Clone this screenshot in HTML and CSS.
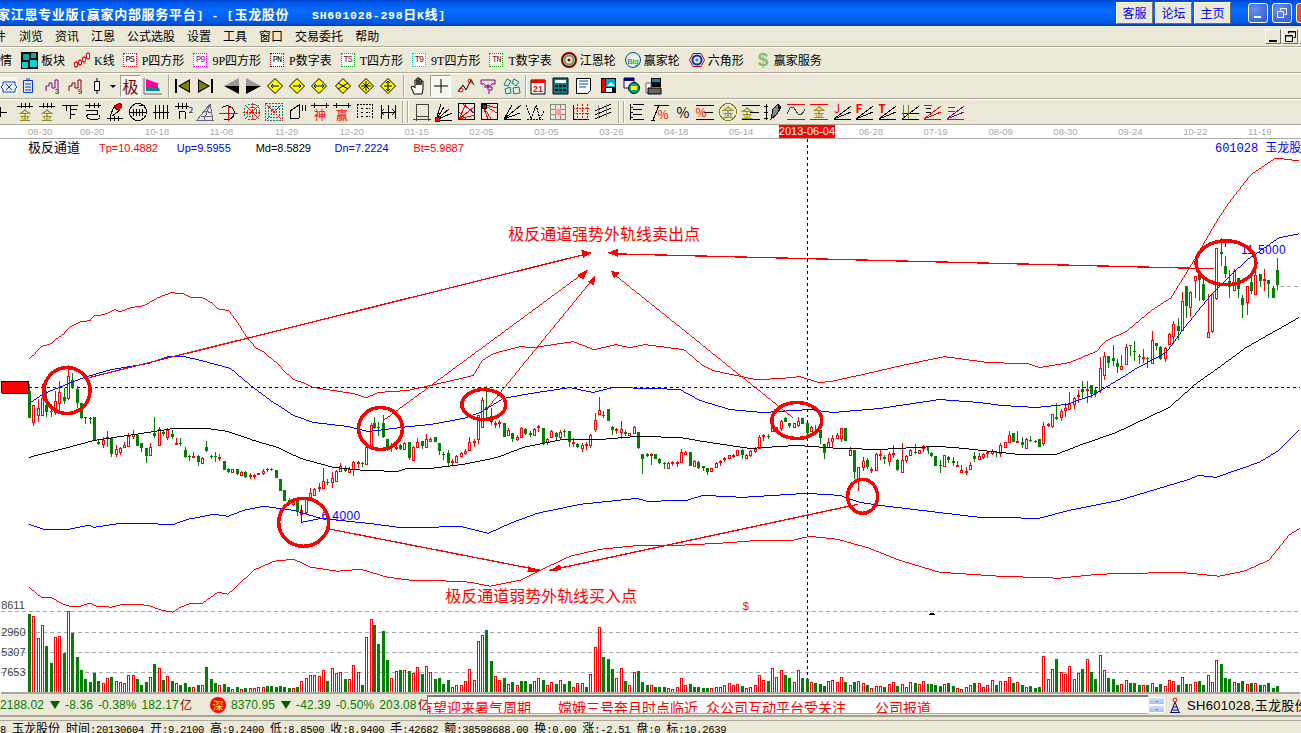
FILE: index.html
```html
<!DOCTYPE html>
<html lang="zh-CN">
<head>
  <meta charset="UTF-8" />
  <title>赢家江恩专业版</title>
  <link rel="stylesheet" href="styles.css">
</head>
<body>

<!-- title bar -->
<header class="titlebar">
  <div class="title-text">家江恩专业版<span>[</span>赢家内部服务平台<span>] - [</span>玉龙股份<span>   SH601028-298</span>日<span>K</span>线<span>]</span></div>
  <div class="title-links">
    <button class="link-btn">客服</button>
    <button class="link-btn">论坛</button>
    <button class="link-btn">主页</button>
  </div>
  <div class="caption">
    <div class="cap-btn"><svg width="18" height="18"><path d="M5 12h7v2H5z" fill="#fff"/></svg></div>
    <div class="cap-btn"><svg width="18" height="18" fill="none" stroke="#fff"><path d="M7.500 6.500v-2h6v6h-2"/><path d="M4.500 7.500h6v6h-6z"/></svg></div>
    <div class="cap-btn cap-close"></div>
  </div>
</header>

<!-- menu -->
<nav class="menubar">
  <span class="menu-cut">件</span>
  <span>浏览</span><span>资讯</span><span>江恩</span><span>公式选股</span><span>设置</span><span>工具</span><span>窗口</span><span>交易委托</span><span>帮助</span>
  <div class="mdi">
    <div class="mdi-btn"><svg width="14" height="13"><path d="M3 10h8v2H3z"/></svg></div>
    <div class="mdi-btn"><svg width="14" height="13" fill="none" stroke="#000"><path d="M5.500 3.500v-2h7v6h-2"/><path d="M2.500 5.500h7v6h-7z"/><path d="M5 2h7M2 6h7"/></svg></div>
    <div class="mdi-btn"></div>
  </div>
</nav>

<!-- toolbar: tools with labels -->
<div class="tb tb1">
  <span class="tool menu-cut">情</span>
  <div class="tool">
    <svg width="17" height="17"><path d="M0 0h17v17H0z"/><path d="M2 2h6v6H2zM10 1h5v5h-5z" fill="#00b0b0"/><path d="M1 10h6v6H1zM9 8h7v7H9z" fill="#00d8d8"/></svg>
    <span>板块</span>
  </div>
  <div class="tool tool-k">
    <svg width="17" height="17" fill="#fff" stroke="#f00" class="crisp"><path d="M2 9v7M6 7v7M10 4v8M14 0v8" /><path d="M0.500 10.500h3v4h-3zM4.500 8.500h3v4h-3zM8.500 5.500h3v4h-3zM12.500 1.500h3v5h-3z"/></svg>
    <span>K线</span>
  </div>
  <div class="tool"><b class="box red">PS</b><span>P四方形</span></div>
  <div class="tool"><b class="box pink">P9</b><span>9P四方形</span></div>
  <div class="tool"><b class="box dred">PN</b><span>P数字表</span></div>
  <div class="tool"><b class="box green">TS</b><span>T四方形</span></div>
  <div class="tool"><b class="box cyan">T9</b><span>9T四方形</span></div>
  <div class="tool"><b class="box lgreen">TN</b><span>T数字表</span></div>
  <div class="tool">
    <svg width="16" height="16" fill="none"><circle cx="8" cy="8" r="7" stroke="#800000" stroke-width="2"/><circle cx="8" cy="8" r="4.500" stroke="#6a9a6a" stroke-width="2"/><circle cx="8" cy="8" r="1.500" fill="#800000"/></svg>
    <span>江恩轮</span>
  </div>
  <div class="tool">
    <svg width="16" height="16"><circle cx="8" cy="8" r="7.500" fill="#e8f0e8" stroke="#004c8c"/><text x="8" y="12" class="big">Big</text></svg>
    <span>赢家轮</span>
  </div>
  <div class="tool">
    <svg width="16" height="16" fill="none"><path d="M4 1.500h8L15.500 8 12 14.500H4L.5 8z" stroke="#c00000"/><circle cx="8" cy="8" r="4.500" stroke="#0030c0" stroke-width="2"/><circle cx="8" cy="8" r="1.500" fill="#0090c0"/></svg>
    <span>六角形</span>
  </div>
  <div class="tool m5">
    <span class="dollar">$</span>
    <span>赢家服务</span>
  </div>
</div>

<!-- toolbar: view and period -->
<div class="tb tb2">
  <svg class="press-flat" width="18" height="18" fill="none" stroke="#0040e0"><path d="M3 5h12v3l2 2-2 2v3H3v-3l-2-2 2-2z"/><path d="M6 7l6 6M12 7l-6 6"/></svg>
  <svg class="m2" width="16" height="18" fill="none" stroke="#0040e0"><path d="M3.500 3.500h9v12h-9z"/><path d="M5 7h6M5 10h6M5 13h6M6 2h4"/></svg>
  <svg class="m9" width="16" height="18" fill="none" stroke="#800080"><path d="M1 14V9h3V6h3v5h3V3h3v9"/><text x="12" y="17" class="tiny">3</text></svg>
  <svg class="m7" width="16" height="18" fill="none" stroke="#800000"><path d="M1 14V9h3V6h3v5h3V3h3v9"/><text x="12" y="17" class="tiny">9</text></svg>
  <svg class="m8" width="24" height="18" fill="none" stroke="#000"><path d="M5 1v16"/><path d="M2.500 4.500h5v9h-5z" fill="#fff"/><path d="M18 8h6l-3 3z" fill="#000" stroke="none"/></svg>
  <div class="press m4"><span class="ji">极</span></div>
  <svg class="m2" width="20" height="18"><path d="M1 1v16h18" fill="none" stroke="#666"/><path d="M3 2l14 5H3z" fill="#f0a"/><path d="M3 7h12v5H3z" fill="#f0a"/><path d="M3 10l13 1 1 3H3z" fill="#088"/></svg>
  <div class="sep m5"></div>
  <svg class="m4" width="18" height="18"><path d="M1 2h2v14H1zM16 2v14L4 9z" fill="#000"/><path d="M15 4v10L6 9z" fill="#808000"/></svg>
  <svg class="m4" width="18" height="18"><path d="M15 2h2v14h-2zM2 2v14L14 9z" fill="#000"/><path d="M3 4v10l9-5z" fill="#808000"/></svg>
  <svg class="m8" width="18" height="18"><path d="M17 1v8H2z" fill="#999"/><path d="M17 17V9H2z" fill="#000"/></svg>
  <svg class="m5" width="18" height="18"><path d="M1 1v8h15z" fill="#999"/><path d="M1 17V9h15z" fill="#000"/></svg>
  <div class="dia m4"><svg width="16" height="16" viewBox="0 0 16 16"><path d="M8 .5L15.500 8 8 15.500.5 8z" fill="#ff0" stroke="#000"/><path d="M4 8h8M4 8l2-2M4 8l2 2" fill="none" stroke="#000"/></svg></div>
  <div class="dia m6"><svg width="16" height="16" viewBox="0 0 16 16"><path d="M8 .5L15.500 8 8 15.500.5 8z" fill="#ff0" stroke="#000"/><path d="M4 8h8M12 8l-2-2M12 8l-2 2" fill="none" stroke="#000"/></svg></div>
  <div class="dia m6"><svg width="16" height="16" viewBox="0 0 16 16"><path d="M8 .5L15.500 8 8 15.500.5 8z" fill="#ff0" stroke="#000"/><path d="M3 8h10M3 8l2-2M3 8l2 2M13 8l-2-2M13 8l-2 2" fill="none" stroke="#000"/></svg></div>
  <div class="dia m8"><svg width="16" height="16" viewBox="0 0 16 16"><path d="M8 .5L15.500 8 8 15.500.5 8z" fill="#ff0" stroke="#000"/><path d="M3 5l10 6M3 11l10-6" fill="none" stroke="#000"/></svg></div>
  <div class="dia m7"><svg width="16" height="16" viewBox="0 0 16 16"><path d="M8 .5L15.500 8 8 15.500.5 8z" fill="#ff0" stroke="#000"/><path d="M3 8h10M8 3v10M5 5l6 6M5 11l6-6" fill="none" stroke="#000"/></svg></div>
  <div class="dia m6"><svg width="16" height="16" viewBox="0 0 16 16"><path d="M8 .5L15.500 8 8 15.500.5 8z" fill="#ff0" stroke="#000"/><path d="M8 3v10M8 3L6 5M8 3l2 2M8 13l-2-2M8 13l2-2M4 8h8" fill="none" stroke="#000"/></svg></div>
  <div class="sep m7"></div>
  <svg class="m5" width="16" height="18" fill="#fff" stroke="#000"><path d="M4 17l-3-7 2-1 2 2V3h2v5V1h2v7V2h2v6V4h2v8l-1 5z"/></svg>
  <div class="press m4"><svg width="18" height="18" fill="none" stroke="#000"><path d="M9 2v14M2 9h14"/></svg></div>
  <svg class="m6" width="18" height="18" fill="none"><path d="M1 15l5-7 3 5 5-10 3 5" stroke="#000"/><circle cx="4" cy="13" r="2" stroke="#f00"/><circle cx="13" cy="4" r="2" stroke="#f00"/></svg>
  <svg class="m4" width="18" height="18" fill="none" stroke="#800080"><path d="M2 3h14v4h-3l-2 2H7L5 7H2zM5 10h8v3h-3v4M9 7v6"/></svg>
  <svg class="m6" width="18" height="18" fill="none" stroke="#008080"><path d="M4 2l-3 6 4 1 3-5zM11 2l5 3-3 4-4-3zM2 12l5-2 1 6-5 1zM10 11l6-1 1 6-6 1z"/></svg>
  <div class="sep m4"></div>
  <svg class="m3" width="17" height="18"><path d="M1 3h14v14H1z" fill="#fff" stroke="#000"/><path d="M1 3h14v3H1z" fill="#f00"/><text x="8" y="15" class="cal">21</text></svg>
  <svg class="m5" width="17" height="18"><path d="M1 1h15v16H1z" fill="#008080" stroke="#000"/><path d="M3 3h11v3H3z" fill="#fff"/><path d="M3 8h3v2H3zM7 8h3v2H7zM11 8h3v2h-3zM3 12h3v2H3zM7 12h3v2H7zM11 12h3v2h-3z" fill="#000"/></svg>
  <svg class="m6" width="17" height="18" fill="none" stroke="#000"><path d="M1.500 1.500h14v12l-3 3h-11z" fill="#fff"/><path d="M4 4h9M4 7h9M4 10h7" stroke="#0040e0"/></svg>
  <svg class="m8" width="17" height="18"><path d="M1 1h15v15H1z" fill="#000"/><path d="M2 2h3v13H2z" fill="#f00"/><path d="M6 2h9v8H6z" fill="#0ac"/><path d="M7 9l4-4 4 4z" fill="#fff"/><path d="M6 11h6v4H6z" fill="#fff"/></svg>
  <svg class="m6" width="17" height="18"><path d="M1 1h10v10H1z" fill="#fff" stroke="#00008c"/><path d="M1 1h10v3H1z" fill="#00008c"/><circle cx="11" cy="11" r="5.500" fill="#0a8" stroke="#000"/><path d="M8 9h6v4H8z" fill="#ff0"/></svg>
  <svg class="m5" width="17" height="18"><path d="M6 1h10v9H6z" fill="#000"/><path d="M7 2h8v3H7z" fill="#08c"/><path d="M1 6h5v10H1z" fill="#fff" stroke="#666"/><path d="M3 11h13v6H3z" fill="#666" stroke="#000"/></svg>
</div>

<!-- toolbar: drawing tools -->
<div class="tb tb3">
  <svg class="ic first" width="20" height="20"><path d="M0 10h15M8 5v10"/></svg>
  <svg class="ic" width="20" height="20"><path d="M2 4h16M6 1v5M10 1v5M14 1v5"/><text x="10" y="18" class="kin">金</text></svg>
  <svg class="ic" width="20" height="20"><path d="M2 4h16M6 1v5M10 1v5M14 1v5"/><text x="10" y="18" class="kin">金</text></svg>
  <svg class="ic" width="20" height="20"><path d="M2 3.500h16M6 3.500v5M10 3v14M10.500 7.500h6M10.500 12.500h4"/></svg>
  <svg class="ic" width="20" height="20"><path d="M2 3.500h16M6 1v5M11 1v5M15 1v5M3 8h11v4H6c-3 0-3 5 1 5h8c2 0 3-2 1-4"/></svg>
  <svg class="ic" width="20" height="20"><path d="M2 16h16M5 14v5M9 14v5M13 14v5M5 14l4-9 5 4-7 5"/><path d="M9 4l6-3 2 3-3 5z" fill="#f00" stroke="#800"/></svg>
  <svg class="ic" width="20" height="20"><circle cx="10" cy="10" r="8.500"/><path d="M1 10h18M5 7v7M8 7v7M11 7v7M14 7v7M11 4l6-1"/></svg>
  <svg class="ic" width="20" height="20"><path d="M2 10h16M4 3v14M8 3v14M12 3v14M16 3v14"/></svg>
  <svg class="ic" width="20" height="20"><path d="M1 4h14M4 1v6M8 1v6M12 1v6M5 17v-7c0-1 6-1 6 0v7"/><text x="17" y="11" class="tiny">2</text></svg>
  <svg class="ic" width="20" height="20"><path d="M1 18L14 2l3 16zM14 2L8 18M5 14l11 1M9 9l7 2" stroke="#668"/></svg>
  <svg class="ic" width="20" height="20"><path d="M3 6a7 7 0 1 1 2 11"/><path d="M9 3v16M0 11h19M9 6l5-1" stroke="#f00"/></svg>
  <svg class="ic" width="20" height="20" stroke-dasharray="2 1"><circle cx="10" cy="10" r="8" stroke="#088"/><circle cx="10" cy="10" r="5" stroke="#088"/><path d="M1 10h18M10 1v18M3 3l14 14M17 3L3 17" stroke="#f00"/></svg>
  <svg class="ic" width="20" height="20" stroke-dasharray="2 1"><path d="M1.500 1.500h17v17h-17zM4.500 4.500h11v11h-11z" stroke="#088"/><path d="M7.500 7.500h5v5h-5z" stroke="#088"/><path d="M1 1l18 18M19 1L1 19" stroke="#f00"/></svg>
  <svg class="ic" width="20" height="20"><path d="M3 17V9l9-6v13L3 17M15 3v6M18 3v6" stroke-dasharray="none"/></svg>
  <svg class="ic" width="20" height="20"><path d="M1 3.500h18M4 1v5M16 1v5"/><text x="10" y="18" class="rk">神</text></svg>
  <svg class="ic" width="20" height="20"><path d="M1 3.500h18M4 1v5M16 1v5"/><text x="10" y="18" class="rk">赢</text></svg>
  <svg class="ic" width="20" height="20"><path d="M2 2.500h16M2.500 2v15M17.500 2v15M6 6h2M11 6h4M6 10h2M11 10h4M6 14h2M11 14h4" stroke-dasharray="2 1"/></svg>
  <svg class="ic" width="20" height="20"><path d="M3 3v14M17 3v14M10 3v14M3 10h14M3 10l3-3M3 10l3 3M17 10l-3-3M17 10l-3 3"/></svg>
  <div class="sep m2"></div>
  <div class="sep"></div>
  <svg class="ic" width="20" height="20"><path d="M4 2.500h12v12H4zM1 17.500h18M4 14v5M16 14v5" stroke="#444"/></svg>
  <svg class="ic" width="20" height="20" stroke="#f00"><path d="M2 18L7 2M2 18l8-13M2 18L15 7M2 18l16-7M2 18h16"/><path d="M1 15h4v4H1z" fill="#f00" stroke="#800"/></svg>
  <svg class="ic" width="20" height="20"><path d="M1.500 1.500h16v16h-16z"/><path d="M2 17L9 2M2 17L17 5M2 17l16-4" stroke="#f00"/><path d="M2 10l8 8M6 2l12 10" stroke="#808"/></svg>
  <svg class="ic" width="20" height="20"><path d="M1.500 1.500h16v16h-16z"/><path d="M2 2l9 15M2 2l15 9M2 2l15 4M2 2l6 15" stroke="#f00"/><path d="M2 2h4v4H2z" fill="#808"/></svg>
  <svg class="ic" width="20" height="20"><path d="M1 17L18 3M1 17l16-6M1 17h17M1 17l8-14" /></svg>
  <svg class="ic" width="20" height="20"><path d="M1 3l5 14 5-14 4 14 4-8M2 17h16" stroke-dasharray="2 1"/></svg>
  <svg class="ic" width="20" height="20"><path d="M2.500 2.500h15v15h-15zM7.500 2v16M12.500 2v16M2 7.500h16M2 12.500h16" stroke="#888"/><path d="M7 7h6v6H7z" fill="#f99" stroke="none"/></svg>
  <svg class="ic" width="20" height="20"><path d="M2.500 2.500v15h15"/><path d="M6.500 2v16M11.500 2v16M16.500 2v16M2 6.500h16M2 11.500h16" stroke="#f00" stroke-dasharray="2 1"/></svg>
  <svg class="ic" width="20" height="20"><path d="M2 9l16-7M2 13L18 6M2 17l16-7"/><path d="M5 3v14M13 2v13" stroke="#888"/></svg>
  <div class="sep m2"></div>
  <div class="sep"></div>
  <svg class="ic" width="20" height="20"><path d="M3 2v16M6 2.500h11M6 7.500h9M6 12.500h9M6 17.500h11M3 5h3M3 10h3M3 15h3"/></svg>
  <svg class="ic" width="20" height="20"><path d="M4 3.500h15M3 18L9 3M1 18h4" stroke="#000"/><text x="13" y="17" class="pct">%</text></svg>
  <svg class="ic" width="20" height="20"><text x="10" y="16" class="pct black">%</text></svg>
  <svg class="ic" width="20" height="20"><path d="M1 3.500h18M9 10.500h9M1 17.500h18"/><text x="6" y="15" class="pct">%</text></svg>
  <svg class="ic" width="20" height="20"><circle cx="10" cy="10" r="8.500" stroke="#808000"/><text x="10" y="15" class="kin">金</text></svg>
  <svg class="ic" width="20" height="20"><path d="M1 3.500h18M9 10.500h9M1 17.500h18"/><text x="6" y="16" class="kin">金</text></svg>
  <svg class="ic" width="20" height="20"><path d="M3 2v16M1 4h4M1 16h4M1 10h4"/><path d="M8 17l2-10 5-5 3 3-4 7z" fill="#888"/><path d="M15 2l3 3-3 2z" fill="#f00"/></svg>
  <svg class="ic" width="20" height="20"><path d="M1 2.500h18M1 17.500h18" stroke="#f00"/><path d="M1 12c4-10 6-8 9-3s5 6 9-2" stroke="#444"/></svg>
  <svg class="ic" width="20" height="20"><path d="M1 2.500h18M1 17.500h18" stroke="#f00"/><text x="10" y="15" class="kin">金</text></svg>
  <svg class="ic" width="20" height="20"><path d="M2 17L19 4M2 17h17M2 17L19 10"/><text x="5" y="11" class="rk">J</text></svg>
  <svg class="ic" width="20" height="20"><path d="M2 17L19 4M2 17h17M2 17L19 10"/><text x="5" y="11" class="rk bold">F</text></svg>
  <svg class="ic" width="20" height="20"><path d="M2 17L19 4M2 17h17M2 17L19 10"/><text x="5" y="11" class="rk bold">T</text></svg>
  <svg class="ic" width="20" height="20"><path d="M2 17L19 4M2 17h17M2 11h17" /><path d="M3 3v14M8 3v14" stroke="#808000"/></svg>
  <svg class="ic" width="20" height="20"><path d="M2 17L19 4M2 17h17M2 17L19 10M2 3h8" stroke="#f00"/><path d="M4 6h5M4 10h5" stroke="#000"/></svg>
  <svg class="ic" width="20" height="20"><path d="M2 17L19 4M2 17L19 10" stroke="#808"/><path d="M2 17h17M3 5h7M3 9h7" stroke="#f00"/></svg>
</div>

<!-- date axis -->
<div class="axis">
  <span class="tick tick-first">08-30</span><span class="tick">09-20</span><span class="tick">10-18</span><span class="tick">11-08</span><span class="tick">11-29</span><span class="tick">12-20</span><span class="tick">01-15</span><span class="tick">02-05</span><span class="tick">03-05</span><span class="tick">03-26</span><span class="tick">04-18</span><span class="tick">05-14</span><span class="tick"><b class="cur">2013-06-04</b></span><span class="tick">06-28</span><span class="tick">07-19</span><span class="tick">08-09</span><span class="tick">08-30</span><span class="tick">09-24</span><span class="tick">10-22</span><span class="tick">11-19</span>
</div>

<!-- chart, numbers in page pixels -->
<svg class="chart" width="1301" height="556" viewBox="0 138 1301 556">
  <text x="27" y="151" class="legend-name">极反通道</text>
  <text x="98" y="151" class="legend red">Tp=10.4882</text>
  <text x="176" y="151" class="legend blue">Up=9.5955</text>
  <text x="255" y="151" class="legend dark">Md=8.5829</text>
  <text x="334" y="151" class="legend blue">Dn=7.2224</text>
  <text x="413" y="151" class="legend red">Bt=5.9887</text>
  <text x="1216" y="151" class="stock-name">601028 玉龙股份</text>

  <path d="M0 611.500H1301M0 632.500H1301M0 652.500H1301M0 672.500H1301" class="grid"/>
  <path d="M1281 285.500H1301" class="grid"/>
  <path d="M28 386.500H1301M807.500 138V692" class="cross"/>
  <path d="M0.500 380.500h27v12h-27z" fill="#f00" stroke="#000"/>

  <text x="0" y="609" class="vol-label">8611</text>
  <text x="0" y="636" class="vol-label">2960</text>
  <text x="0" y="656" class="vol-label">5307</text>
  <text x="0" y="676" class="vol-label">7653</text>

  <g id="vols"></g>
  <path d="M0 692h1301v2H0z" fill="#a8a8a8"/>
  <g id="candles"></g>

  <polyline class="band-r" points="28,358 33,354 40,346 50,343 57,337 63,333 68,327 80,321 89,320 93,315 103,314 114,309 119,311 130,307 143,305 157,297 170,292 183,293 190,297 202,297 212,303 217,308 228,310 237,322 245,335 255,347 263,351 267,355 277,363 283,370 293,379 302,382 313,387 333,390 353,393 365,397 377,392 407,390 430,385 473,375 482,360 493,353 520,346 533,347 573,341 594,349 616,344 630,347 645,344 684,349 703,365 713,370 756,379 781,378 800,376 819,382 831,381 863,374 902,365 945,356 989,362 1028,363 1040,367 1070,362 1097,351 1107,340 1127,331 1152,310 1172,297 1193,263 1218,220 1230,202 1247,180 1253,173 1277,157 1300,160"/>
  <polyline class="band-b" points="28,403 43,393 83,377 110,369 147,363 167,356 183,356 197,359 223,366 230,368 250,385 270,400 293,415 313,422 347,426 367,431 400,427 430,424 463,418 480,412 503,398 530,393 570,387 593,392 613,387 657,388 680,389 700,400 730,409 763,412 810,409 833,412 880,408 940,399 980,402 1003,405 1037,407 1067,404 1093,395 1123,377 1137,368 1167,352 1187,325 1213,293 1247,260 1280,237 1300,233"/>
  <polyline class="band-k" points="28,457 43,453 67,447 93,440 147,432 173,428 207,428 227,431 253,440 277,447 300,458 333,467 363,470 397,471 407,468 430,468 463,464 497,457 523,447 563,439 600,439 637,436 680,437 703,441 750,448 797,445 840,448 880,449 917,447 939,446 965,448 982,450 1020,454 1057,454 1080,445 1117,432 1170,407 1197,383 1220,367 1247,347 1277,330 1300,317"/>
  <polyline class="band-b" points="28,524 43,529 67,529 88,525 93,527 120,523 173,524 187,519 213,514 227,516 243,510 263,506 293,510 320,518 367,523 397,527 430,527 460,526 488,533 510,523 537,513 580,504 637,498 647,501 687,500 703,495 743,497 807,493 840,495 860,502 880,505 930,511 980,517 1040,518 1070,510 1120,500 1190,479 1200,475 1217,477 1237,470 1260,462 1280,450 1300,430"/>
  <polyline class="band-r" points="28,587 40,597 50,597 60,603 68,606 80,606 89,603 95,606 110,607 123,604 147,605 160,610 172,612 180,607 190,603 202,603 217,592 227,594 233,589 253,570 273,561 293,559 310,567 337,571 360,569 387,577 410,580 430,580 470,582 490,586 520,580 540,570 570,556 600,549 640,545 680,545 720,543 760,540 793,540 810,536 838,539 870,548 900,560 940,572 1000,576 1060,578 1100,574 1180,572 1220,576 1245,571 1270,560 1290,535 1301,528"/>

  <!-- hand drawn notes over the chart -->
  <path d="M300.500 505V522L321 518M1227 240v6" class="note-blue"/>
  <text x="321" y="520" class="price">6.4000</text>
  <text x="1242" y="253" class="price">11.5000</text>
  <path d="M88 377L585 253.500M612 253L1215 268M325 528L540 570M858 504L550 570" class="arrow"/>
  <path d="M383 420L588 269M487 408L593 278M793 417L612 272" class="arrow-thin"/>
  <path d="M592 252L581 249 583 257zM607 252L618 248 618 256zM588 269L577 274 583 279zM595 275L588 281 594 285zM611 270L620 272 614 278zM540 571L528 566 527 572zM548 571L560 564 561 570z" fill="#f00"/>
  <ellipse class="ring" cx="66" cy="390" rx="23" ry="23"/>
  <ellipse class="ring" cx="380" cy="428" rx="22" ry="21"/>
  <ellipse class="ring" cx="303" cy="522" rx="25" ry="24"/>
  <ellipse class="ring" cx="483.500" cy="404" rx="22" ry="15"/>
  <ellipse class="ring" cx="797" cy="420" rx="25" ry="18"/>
  <ellipse class="ring" cx="863" cy="496" rx="15" ry="17"/>
  <ellipse class="ring" cx="1227" cy="262" rx="30" ry="22"/>
  <text x="508" y="239" class="note">极反通道强势外轨线卖出点</text>
  <text x="445" y="602" class="note">极反通道弱势外轨线买入点</text>
  <text x="743" y="610" class="mark">$</text>
  <path d="M929 615l3.500-3 3.500 3z" fill="#000"/>
</svg>

<!-- status -->
<div class="status">
  <div class="index">
    <span>2188.02</span><i class="down"></i><span>-8.36</span><span>-0.38%</span><span>182.17</span><em>亿</em>
    <span class="sz">深</span>
    <span>8370.95</span><i class="down"></i><span>-42.39</span><span>-0.50%</span><span>203.08</span><em>亿</em>
  </div>
  <div class="news">
    <span class="n-first">有望迎来暑气周期</span><span class="n-mid">嫦娥三号奔月时点临近</span><span class="n-near">众公司互动平台受关注</span><span class="n-wide">公司报道</span>
  </div>
  <div class="spin"><div class="spin-btn">-</div><div class="spin-btn">-</div></div>
  <div class="quote">
    <svg width="12" height="16" fill="none" stroke="#000080"><path d="M6 5L2 15M6 5l4 10M1 15.500h10M4 10h4M3 13h6"/><circle cx="6" cy="3" r="2" stroke="#f00"/></svg>
    <span>SH601028,玉龙股份</span>
  </div>
</div>
<div class="rule"></div>
<footer class="bottom">
  <span class="cut"><b>8</b></span>
  <span>玉龙股份</span><span>时间<b>:20130604</b></span><span>开<b>:9.2100</b></span><span>高<b>:9.2400</b></span><span>低<b>:8.8500</b></span><span>收<b>:8.9400</b></span><span>手<b>:42682</b></span><span>额<b>:38598688.00</b></span><span>换<b>:0.00</b></span><span>涨<b>:-2.51</b></span><span>盘<b>:0</b></span><span>标<b>:10.2639</b></span>
</footer>

<script src="chart.js"></script>
</body>
</html>
```

FILE: styles.css
```css
:root {
  --face: #ece9d8;
  --line: #aca899;
  --cjk: "Liberation Serif", "Noto Sans CJK SC", serif;
  --num: "Liberation Sans", "Noto Sans CJK SC", sans-serif;
}
* {
  margin: 0;
  padding: 0;
  box-sizing: border-box;
}
body {
  width: 1301px;
  height: 733px;
  overflow: hidden;
  background: var(--face);
  font-family: var(--cjk);
  font-size: 12px;
}
svg {
  display: block;
  flex: none;
}

/* title bar */
.titlebar {
  display: flex;
  align-items: center;
  height: 26px;
  overflow: hidden;
  background: linear-gradient(#0044d0, #0058ee 12%, #0a6cff 40%, #0062f0 70%, #0052dc 90%, #003cb0);
}
.title-text {
  flex: 1;
  margin-left: -3px;
  color: #fff;
  font-family: "Noto Sans CJK SC", sans-serif;
  font-size: 13px;
  font-weight: bold;
  letter-spacing: 0.7px;
  white-space: pre;
}
.title-text span {
  font-family: "Liberation Mono", monospace;
  font-size: 11.5px;
}
.title-links {
  display: flex;
  gap: 2px;
  margin-right: 17px;
}
.link-btn {
  width: 37px;
  height: 22px;
  background: var(--face);
  border: 1px solid;
  border-color: #fff #716f64 #716f64 #fff;
  color: #0000ff;
  font-family: var(--cjk);
  font-size: 12px;
}
.caption {
  display: flex;
  gap: 4px;
  width: 53px;
  flex: none;
}
.cap-btn {
  flex: none;
  width: 20px;
  height: 20px;
  border: 1px solid #fff;
  border-radius: 3px;
  background: radial-gradient(circle at 30% 30%, #6a90f0, #2a55d8);
}
.cap-close {
  background: #e0502a;
}

/* menu */
.menubar {
  display: flex;
  align-items: center;
  gap: 12px;
  height: 21px;
  padding-left: 19px;
  border-bottom: 1px solid var(--line);
}
.menu-cut {
  width: 6px;
  margin-left: -19px;
  margin-right: 1px;
  overflow: hidden;
  direction: rtl;
}
.mdi {
  display: flex;
  margin-left: auto;
  margin-right: -14px;
  gap: 1px;
}
.mdi-btn {
  width: 16px;
  height: 15px;
  background: var(--face);
  border: 1px solid;
  border-color: #fff #716f64 #716f64 #fff;
}

/* toolbars */
.tb {
  display: flex;
  align-items: center;
  height: 26px;
  border-top: 1px solid #fff;
  border-bottom: 1px solid var(--line);
  overflow: hidden;
}
.tb1 {
  gap: 9px;
}
.tb1 .menu-cut {
  width: 12px;
  margin: 0;
  flex: none;
}
.tool {
  display: flex;
  align-items: center;
  gap: 3px;
  white-space: nowrap;
}
.tool-k {
  margin-right: -1px;
}
.box {
  flex: none;
  width: 14px;
  height: 14px;
  margin-right: 2px;
  border: 1px dotted;
  font: 8.500px/12px "Liberation Mono", monospace;
  letter-spacing: -0.8px;
  text-align: center;
  color: #000;
  background: #fff;
}
.red { border-color: #f00; }
.pink { border-color: #f0f; color: #800080; }
.dred { border-color: #800000; }
.green { border-color: #0a0; color: #800000; }
.cyan { border-color: #0cc; color: #800000; }
.lgreen { border-color: #0a0; color: #a00000; }
.big {
  fill: #008000;
  font: 8px var(--num);
  text-anchor: middle;
}
.dollar {
  width: 13px;
  color: #7fbf7f;
  font: bold 19px var(--num);
  line-height: 20px;
}
.tiny {
  fill: #000;
  stroke: none;
  font: 8px var(--num);
  text-anchor: middle;
}
.cal {
  fill: #f00;
  font: bold 9px var(--num);
  text-anchor: middle;
}
.ji {
  color: #800000;
  font: 16px "Noto Sans CJK SC", sans-serif;
  line-height: 18px;
}
.press {
  display: flex;
  align-items: center;
  justify-content: center;
  width: 21px;
  height: 22px;
  flex: none;
  background: #f7f6ef;
  border: 1px solid;
  border-color: #a09e90 #fff #fff #a09e90;
}
.press-flat {
  background: #f7f6ef;
}
.sep {
  flex: none;
  width: 2px;
  height: 22px;
  border-left: 1px solid var(--line);
  border-right: 1px solid #fff;
}
.m2 { margin-left: 2px; }
.m3 { margin-left: 3px; }
.m4 { margin-left: 4px; }
.m5 { margin-left: 5px; }
.m6 { margin-left: 6px; }
.m7 { margin-left: 7px; }
.m8 { margin-left: 8px; }
.m9 { margin-left: 9px; }
.dia {
  flex: none;
}
.tb3 {
  gap: 2.7px;
}
.first {
  margin-left: -8px;
}
.ic {
  fill: none;
  stroke: #000;
  shape-rendering: crispEdges;
}
.ic text {
  stroke: none;
  text-anchor: middle;
  font-family: "Noto Sans CJK SC", sans-serif;
}
.kin {
  fill: #808000;
  font-size: 12px;
}
.rk {
  fill: #f00;
  font-size: 12px;
}
.ic .bold {
  font-weight: bold;
}
.pct {
  fill: #f00;
  font-size: 12px;
}
.ic .black {
  fill: #000;
  font-size: 14px;
}

/* date axis */
.axis {
  display: flex;
  align-items: center;
  height: 13px;
  padding-left: 28px;
  background: #fff;
  color: #a8a8a8;
  font: 9.500px var(--num);
  overflow: hidden;
}
.tick {
  flex: 0 0 64.9px;
  line-height: 13px;
  white-space: nowrap;
}
.tick-first {
  flex-basis: 52px;
}
.cur {
  display: inline-block;
  margin-left: -15px;
  background: #f00;
  color: #fff;
  font-weight: normal;
  font-size: 11px;
  line-height: 13px;
}

/* chart */
.chart {
  background: #fff;
  border-top: 1px solid #a8a8a8;
}
.chart polyline, .chart path, .chart ellipse, .chart rect {
  shape-rendering: crispEdges;
}
.chart polyline {
  fill: none;
}
.band-r { stroke: #f00; }
.band-b { stroke: #00f; }
.band-k { stroke: #000; }
.grid {
  stroke: #a8a8a8;
  stroke-dasharray: 4 3;
}
.cross {
  stroke: #000;
  stroke-dasharray: 3 3;
}
.legend-name {
  font: 13px "Noto Sans CJK SC", sans-serif;
  fill: #000;
}
.legend {
  font: 11px var(--num);
}
.legend.red { fill: #f00; }
.legend.blue { fill: #00f; }
.legend.dark { fill: #000; }
.stock-name {
  fill: #00f;
  font: 12px "Liberation Mono", "Noto Sans CJK SC", monospace;
}
.vol-label {
  fill: #444;
  font: 11px var(--num);
}
.price {
  fill: #00f;
  font: 12px var(--num);
  letter-spacing: 0.4px;
}
.note {
  fill: #f00;
  font: 16px "Noto Sans CJK SC", sans-serif;
}
.mark {
  fill: #f00;
  font: 11px var(--num);
}
.note-blue {
  fill: none;
  stroke: #00f;
}
.arrow {
  fill: none;
  stroke: #f00;
  stroke-width: 1.3;
}
.arrow-thin {
  fill: none;
  stroke: #f00;
}
.ring {
  fill: none;
  stroke: #f00;
  stroke-width: 3.5;
}

/* status */
.status {
  display: flex;
  height: 21px;
}
.index {
  display: flex;
  align-items: center;
  gap: 5px;
  flex: 0 0 427px;
  color: #008000;
  font: 12px var(--num);
  letter-spacing: 0.1px;
  overflow: hidden;
  white-space: nowrap;
}
.index em {
  margin-left: -4px;
  color: #800000;
  font: normal 12px "Noto Sans CJK SC", sans-serif;
}
.down {
  flex: none;
  width: 0;
  height: 0;
  margin-left: 1px;
  border-left: 5px solid transparent;
  border-right: 5px solid transparent;
  border-top: 8px solid #006000;
}
.sz {
  flex: none;
  width: 16px;
  height: 16px;
  margin-left: 13px;
  border-radius: 50%;
  background: #f00;
  color: #ff0;
  font: 11px/16px "Noto Sans CJK SC", sans-serif;
  text-align: center;
}
.news {
  display: flex;
  flex: 0 0 721px;
  height: 19px;
  margin-top: 1px;
  padding-top: 1px;
  background: #fff;
  border-top: 2px solid #7c7b72;
  border-left: 1px solid #7c7b72;
  border-bottom: 1px solid var(--line);
  overflow: hidden;
  color: #f00;
  font: 14px/18px "Noto Sans CJK SC", sans-serif;
  white-space: nowrap;
}
.news span {
  flex: none;
}
.n-first { margin-left: -9px; }
.n-mid { margin-left: 27px; }
.n-wide { margin-left: 29px; }
.n-near { margin-left: 8px; }
.spin {
  flex: none;
  width: 17px;
  margin-top: 3px;
}
.spin-btn {
  height: 8px;
  background: linear-gradient(#d4e0f8, #a8c0ec);
  border: 1px solid #fff;
  border-radius: 2px;
  color: #204080;
  font: 8px/6px var(--num);
  text-align: center;
}
.quote {
  display: flex;
  align-items: center;
  gap: 6px;
  padding-left: 4px;
  font: 13px var(--num);
  white-space: nowrap;
  overflow: hidden;
  letter-spacing: 0.3px;
  flex: 1;
}
.rule {
  height: 2px;
  background: #a5a394;
}
.bottom {
  display: flex;
  gap: 6px;
  height: 13px;
  margin-top: 3px;
  border-top: 1px solid var(--line);
  font-family: "Noto Sans CJK SC", sans-serif;
  font-size: 12px;
  line-height: 13px;
  white-space: nowrap;
  overflow: hidden;
}
.bottom b {
  font: normal 10.500px "Liberation Mono", monospace;
  letter-spacing: -0.3px;
}
.bottom .cut {
  width: 6px;
}
```

FILE: chart.js
```js
// candles and volume are filled in here because there are so many of them
// a candle is [red?, body top, body bottom, wick top, wick bottom]
// y values were read off a 3x crop: y = 340 + v / 3
var r = 1, g = 0;
var candles = [
  [g,150,233,130,233],[r,192,245,192,257],[r,202,222,175,245],[r,170,222,130,225],[g,192,212,150,232],
  [g,210,214,190,232],[r,180,212,150,222],[r,152,187,120,207],[g,168,180,140,190],[r,105,172,73,177],
  [g,118,142,95,145],[g,143,187,135,200],[g,187,233,187,238],[g,232,234,230,253],[g,234,236,232,253],
  [g,232,300,232,302],[g,305,312,300,315],[r,300,311,290,325],[r,290,295,273,322],[g,295,342,295,350],
  [r,327,342,315,350],[r,325,335,320,345],[r,315,320,305,325],[r,288,318,278,320],[r,282,288,270,298],
  [g,285,317,285,317],[g,308,325,308,335],[g,323,347,323,368],[r,322,344,310,345],[g,278,288,232,295],
  [r,268,315,260,318],[g,275,282,270,287],[r,270,290,263,300],[g,282,292,270,297],[r,309,311,295,315],
  [g,308,312,295,317],[g,330,352,320,355],[g,347,352,345,362],[r,348,352,335,355],[g,348,367,345,377],
  [r,353,370,350,372],[g,322,333,303,335],[g,347,350,345,357],[g,347,350,336,365],[r,351,353,343,362],
  [g,363,390,363,390],[g,386,396,383,398],[r,387,397,387,397],[g,388,402,386,404],[r,396,404,394,408],
  [g,395,411,393,413],[r,405,407,400,417],[r,406,408,403,418],[r,400,402,398,404],[r,392,399,388,404],
  [g,386,388,384,395],[g,386,388,384,392],[g,390,415,390,415],[g,418,452,418,452],[g,450,482,450,482],
  [g,480,487,475,490],[r,487,493,483,497],[g,484,514,484,528],[r,510,522,505,548],[r,475,516,470,522],
  [r,458,470,445,476],[r,447,465,445,467],[r,440,445,428,456],[r,423,443,385,447],[g,425,428,418,435],
  [r,414,425,395,445],[r,393,423,390,425],[r,378,392,370,393],[g,385,392,378,395],[r,388,396,380,398],
  [r,366,388,362,408],[r,366,370,362,385],[g,368,370,366,382],[r,320,372,320,376],[r,256,320,250,328],
  [g,250,263,232,266],[g,260,263,245,287],[g,248,290,223,294],[g,296,323,296,332],[r,319,321,308,336],
  [r,320,322,312,330],[g,316,326,312,330],[r,308,326,306,328],[g,307,353,307,360],[r,320,360,318,362],
  [r,306,322,295,325],[g,303,317,303,328],[r,296,320,283,322],
  // second crop
  [r,296,303,292,305],[g,292,305,292,305],[g,310,332,310,345],[g,342,345,335,360],[g,340,368,330,378],
  [r,364,366,358,378],[r,347,365,345,367],[r,340,348,335,352],[r,332,340,328,345],[r,306,330,292,332],
  [r,302,305,298,320],[r,223,296,223,311],[r,177,260,168,262],[g,197,207,135,238],[g,226,246,200,255],
  [r,249,252,243,263],[r,246,250,240,265],[g,250,290,250,290],[r,270,284,265,288],[g,280,298,278,305],
  [r,290,298,285,302],[r,264,290,262,292],[g,268,282,265,286],[g,280,285,272,292],[r,268,284,265,286],
  [r,258,260,255,276],[g,264,308,264,315],[r,298,306,295,315],[r,274,292,270,295],[g,278,290,275,302],
  [r,275,290,270,298],[g,272,275,268,290],[g,273,305,273,320],[r,305,307,295,320],[g,311,320,308,325],
  [r,316,324,310,335],[r,311,313,306,330],[r,284,315,282,325],[r,240,266,215,275],[r,206,218,168,220],
  [g,222,224,210,234],[g,203,242,203,242],[g,260,270,258,285],[r,267,269,264,282],[r,268,276,243,296],
  [g,275,282,270,287],[r,280,285,278,285],[r,260,280,258,282],[g,276,325,276,327],[g,343,357,343,402],
  [g,342,347,338,352],[r,342,344,340,376],[g,343,358,343,358],[g,358,370,355,372],[g,368,372,366,387],
  [r,370,384,366,387],[r,367,369,364,378],[r,367,370,362,381],[r,337,365,327,367],[r,337,343,334,346],
  [g,336,378,336,378],[r,363,377,361,379],[g,366,384,364,387],[g,379,385,377,392],[g,385,396,385,404],
  [r,385,393,383,396],[r,368,382,366,384],[r,362,364,360,378],[r,353,355,350,365],[r,346,353,344,356],
  [r,346,348,343,354],[r,331,345,329,347],[g,330,345,328,356],[r,344,355,342,358],[r,332,344,329,350],
  [r,328,332,320,340],[r,291,325,285,327],[r,285,287,282,304],[g,288,290,283,296],[r,250,272,250,272],
  [r,262,270,262,270],[r,243,263,240,272],[g,235,245,230,247],[g,248,258,248,265],[r,250,260,248,262],
  [r,242,256,230,260],[g,235,252,235,252],[g,250,278,250,285],[r,262,272,258,276],[g,272,275,255,285],
  [g,270,295,270,312],[g,313,338,313,356],[r,305,320,295,322],[r,293,303,285,325],[r,285,295,280,298],
  [r,265,295,263,306],[g,265,304,265,304],[r,330,346,320,348],[g,330,397,330,416],[r,380,420,380,452],
  [r,362,380,350,392],[g,360,382,355,387],[r,387,389,382,400],[r,342,390,340,392],
  // third crop
  [r,342,345,327,360],[g,350,358,345,372],[r,342,362,335,378],[r,339,341,315,354],[g,360,390,358,392],
  [r,360,395,310,396],[r,348,359,345,368],[r,330,345,327,348],[g,336,338,312,342],[r,330,340,330,340],
  [r,319,323,314,335],[g,320,333,320,343],[g,338,348,335,352],[g,348,378,348,378],[g,376,379,360,398],
  [r,346,377,346,377],[g,352,360,347,368],[g,362,370,352,378],[r,376,378,364,382],[r,390,395,376,395],
  [r,392,393,382,404],[r,376,386,365,386],[g,348,358,337,365],[r,348,356,338,360],[r,342,350,338,356],
  [r,337,340,332,353],[r,332,340,328,345],[g,336,338,332,350]
];
// last crop has y = 150 + v / 3
var lastCrop = [
  [r,885,908,880,920],[r,876,890,876,890],[r,855,877,843,880],[g,850,876,850,876],[r,872,875,843,876],
  [g,875,886,862,893],[r,867,893,865,898],[g,870,873,858,876],[g,873,875,870,880],[g,867,890,867,890],
  [r,828,878,815,888],[r,823,826,818,832],[r,790,827,788,835],[g,798,807,757,810],[r,780,802,775,812],
  [r,770,778,755,798],[r,758,775,722,778],[r,740,760,738,775],[r,733,736,718,757],[g,714,722,690,742],
  [r,714,717,690,755],[g,702,730,702,742],[g,716,730,712,738],[r,652,717,617,725],[r,616,673,604,688],
  [g,616,635,616,650],[g,622,630,582,645],[g,635,648,625,665],[r,646,655,612,658],[r,588,638,580,640],
  [g,583,586,583,615],[g,600,602,570,630],[g,615,617,608,638],[r,619,621,595,635],[g,622,624,618,652],
  [r,568,637,540,638],[g,577,585,577,597],[g,587,625,585,627],[r,590,622,588,632],[r,550,580,545,582],
  [r,520,555,510,580],[g,526,540,502,568],[r,450,538,423,540],[g,405,466,405,500],[r,424,467,420,498],
  [r,376,388,374,440],[g,373,387,373,450],[g,398,446,385,450],[r,544,559,430,560],[r,430,541,430,545],
  [r,292,440,292,448],[g,303,310,262,345],[g,345,370,315,380],[g,390,408,358,440],[r,360,418,355,420],
  [g,380,415,380,440],[g,442,461,432,500],[r,406,452,404,492],[g,393,420,370,430],[r,373,428,350,430],
  [g,370,390,370,407],[r,384,386,355,420],[g,388,400,388,440],[g,410,440,405,440],[g,357,403,322,416]
];

// volume bar tops, y = 590 + |v| / 3, negative is a red bar
var vols = [
  72,-78,-145,-105,168,219,-142,-139,188,-63,129,201,240,267,276,249,273,-280,-265,261,-274,-276,-279,-256,-256,
  267,285,276,-261,222,-234,270,-258,273,-279,285,279,291,-291,285,-285,231,267,279,-285,282,291,-297,291,-297,
  294,-294,-294,-291,-291,288,288,291,288,291,294,-294,291,-273,-264,-255,-255,-258,-240,273,-234,-249,-246,267,-267,
  -225,-246,285,-141,-87,105,162,123,210,-264,-243,240,-240,243,-249,-231,252,-228,-246,267,264,282,270,-291,-285,
  -285,-273,-237,-270,-153,-135,120,213,-258,-270,264,-282,276,-285,273,273,282,-273,-264,270,-285,-276,282,-270,282,
  273,-291,-279,-279,291,-252,-171,-111,201,207,237,-264,-234,273,-285,-246,243,276,285,-285,291,291,291,-294,-297,
  -291,-264,-285,282,291,291,294,294,-294,-291,-291,-285,-279,-285,-282,288,-294,-291,-285,-255,-270,273,-234,-261,-240,
  255,264,-276,-240,264,267,-276,279,282,288,-273,-270,-276,-261,276,-285,276,-273,-279,285,-294,-288,-288,291,-282,
  -276,288,-282,-291,-276,279,-282,-273,282,282,285,288,-282,279,288,-294,-297,-291,-285,279,-279,-291,-285,-270,285,
  -273,-273,-261,279,-276,285,-291,288,294,291,-198,-267,-237,207,-246,-252,-228,-267,-249,237,-207,246,267,-195,-240,
  264,267,285,-282,-270,279,279,285,-285,285,-279,291,282,-288,-270,-273,285,-261,282,-282,-276,273,285,-255,-276,
  -210,222,264,267,-276,279,273,-282,279,-279,285,-285,279,294,288
];

function rect(x, y, w, h, red) {
  var fill = red ? ' fill="#fff" stroke="#f00"' : ' fill="#008000"';
  return '<rect x="' + x + '" y="' + y + '" width="' + w + '" height="' + h + '"' + fill + '/>';
}

function drawCandles() {
  var all = candles.map(function (c) {
    return [c[0], 340 + c[1] / 3, 340 + c[2] / 3, 340 + c[3] / 3, 340 + c[4] / 3];
  }).concat(lastCrop.map(function (c) {
    return [c[0], 150 + c[1] / 3, 150 + c[2] / 3, 150 + c[3] / 3, 150 + c[4] / 3];
  }));
  var step = (1278 - 28) / (all.length - 1);
  var html = '';
  all.forEach(function (c, i) {
    var x = Math.round(28 + i * step) + 0.5;
    var top = Math.round(c[1]), bot = Math.round(c[2]);
    var color = c[0] ? '#f00' : '#008000';
    html += '<path d="M' + x + ' ' + Math.round(c[3]) + 'V' + Math.round(c[4]) + '" stroke="' + color + '"/>';
    if (c[0]) {
      html += rect(x - 1, top + 0.5, 2, Math.max(bot - top, 1), true);
    } else {
      html += rect(x - 1.5, top, 3, Math.max(bot - top, 1), false);
    }
  });
  document.getElementById('candles').innerHTML = html;
}

function drawVols() {
  var step = (1278 - 28) / (vols.length - 1);
  var html = '';
  vols.forEach(function (v, i) {
    var x = Math.round(28 + i * step) + 0.5;
    var top = Math.round(590 + Math.abs(v) / 3);
    if (v < 0) {
      html += rect(x - 1, top + 0.5, 2, 692 - top, true);
    } else {
      html += rect(x - 1.5, top, 3, 692 - top, false);
    }
  });
  document.getElementById('vols').innerHTML = html;
}

drawVols();
drawCandles();
```
